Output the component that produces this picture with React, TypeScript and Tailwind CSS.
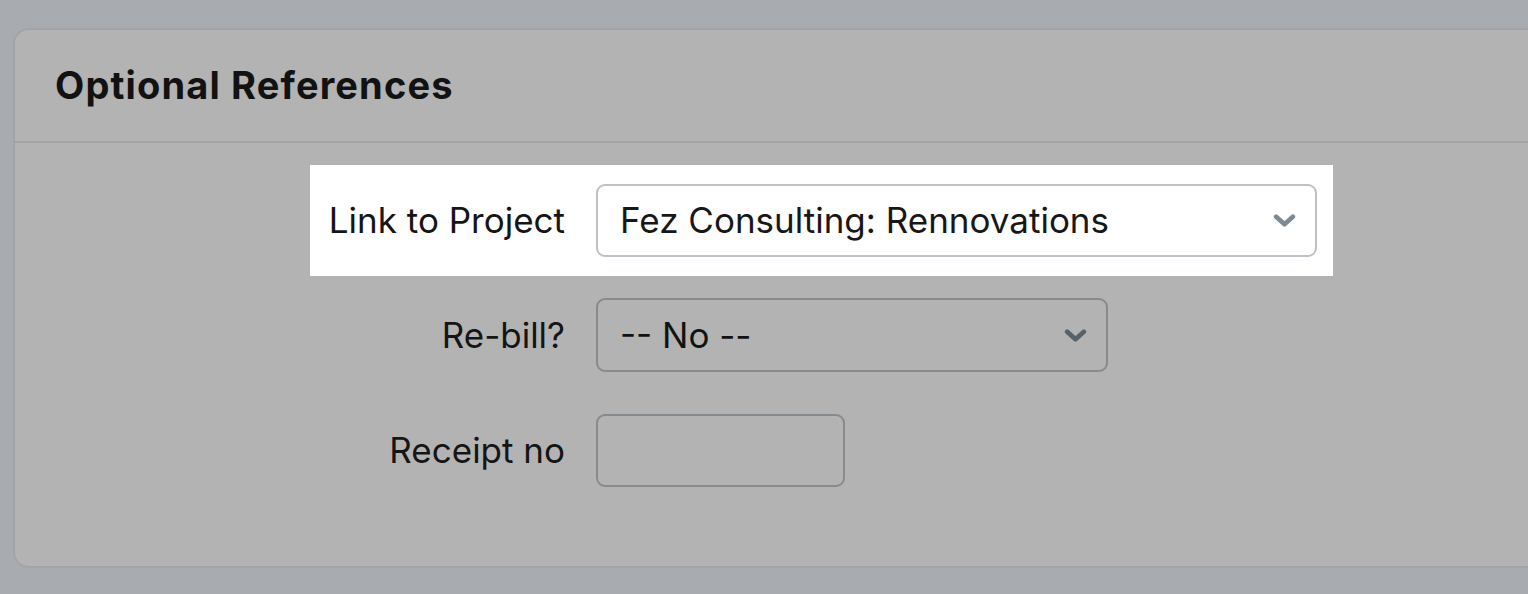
function Chevron({ className }: { className: string }) {
  return (
    <svg viewBox="0 0 24 14" className={className} fill="none">
      <path d="M3 3l9 8 9-8" stroke="currentColor" strokeWidth="5" strokeLinecap="round" strokeLinejoin="round" />
    </svg>
  );
}

function Row({ label, children, active }: { label: string; children: React.ReactNode; active?: boolean }) {
  return (
    <div
      className={
        active
          ? "-mx-[17px] -my-[19px] flex w-fit items-center gap-[31px] bg-white px-[16px] py-[19px] pl-[17px]"
          : "flex w-fit items-center gap-[31px]"
      }
    >
      <label className="w-[238px] text-right text-[35px] whitespace-nowrap text-[#151515]">{label}</label>
      {children}
    </div>
  );
}

export default function App() {
  return (
    <div className="min-h-[594px] overflow-hidden bg-[#a8abb0] pt-[28px] pl-[13px] font-['Inter',sans-serif]">
      <div className="w-[1560px] rounded-[16px] border-2 border-[#a3a4a7] bg-[#b3b3b3]">
        <div className="flex h-[113px] items-center border-b-2 border-[#a2a3a7] pl-[40px]">
          <h2 className="text-[38px] font-bold tracking-[0.03em] text-[#121212]">Optional References</h2>
        </div>
        <div className="flex flex-col pt-[41px] pb-[79px] pl-[312px]">
          <Row label="Link to Project" active>
            <div className="flex h-[73px] w-[721px] items-center justify-between rounded-[9px] border-2 border-[#bcc2c7] bg-white pr-[19px] pl-[22px]">
              <span className="text-[35px] text-[#171717]">Fez Consulting: Rennovations</span>
              <Chevron className="h-[13px] w-[23px] text-[#7b8a95]" />
            </div>
          </Row>
          <div className="mt-[41px]">
            <Row label="Re-bill?">
              <div className="flex h-[74px] w-[512px] items-center justify-between rounded-[9px] border-2 border-[#868b90] pr-[19px] pl-[22px]">
                <span className="text-[35px] text-[#121212]">-- No --</span>
                <Chevron className="h-[13px] w-[23px] text-[#56616a]" />
              </div>
            </Row>
          </div>
          <div className="mt-[42px]">
            <Row label="Receipt no">
              <div className="h-[73px] w-[249px] rounded-[9px] border-2 border-[#868b90]" />
            </Row>
          </div>
        </div>
      </div>
    </div>
  );
}
